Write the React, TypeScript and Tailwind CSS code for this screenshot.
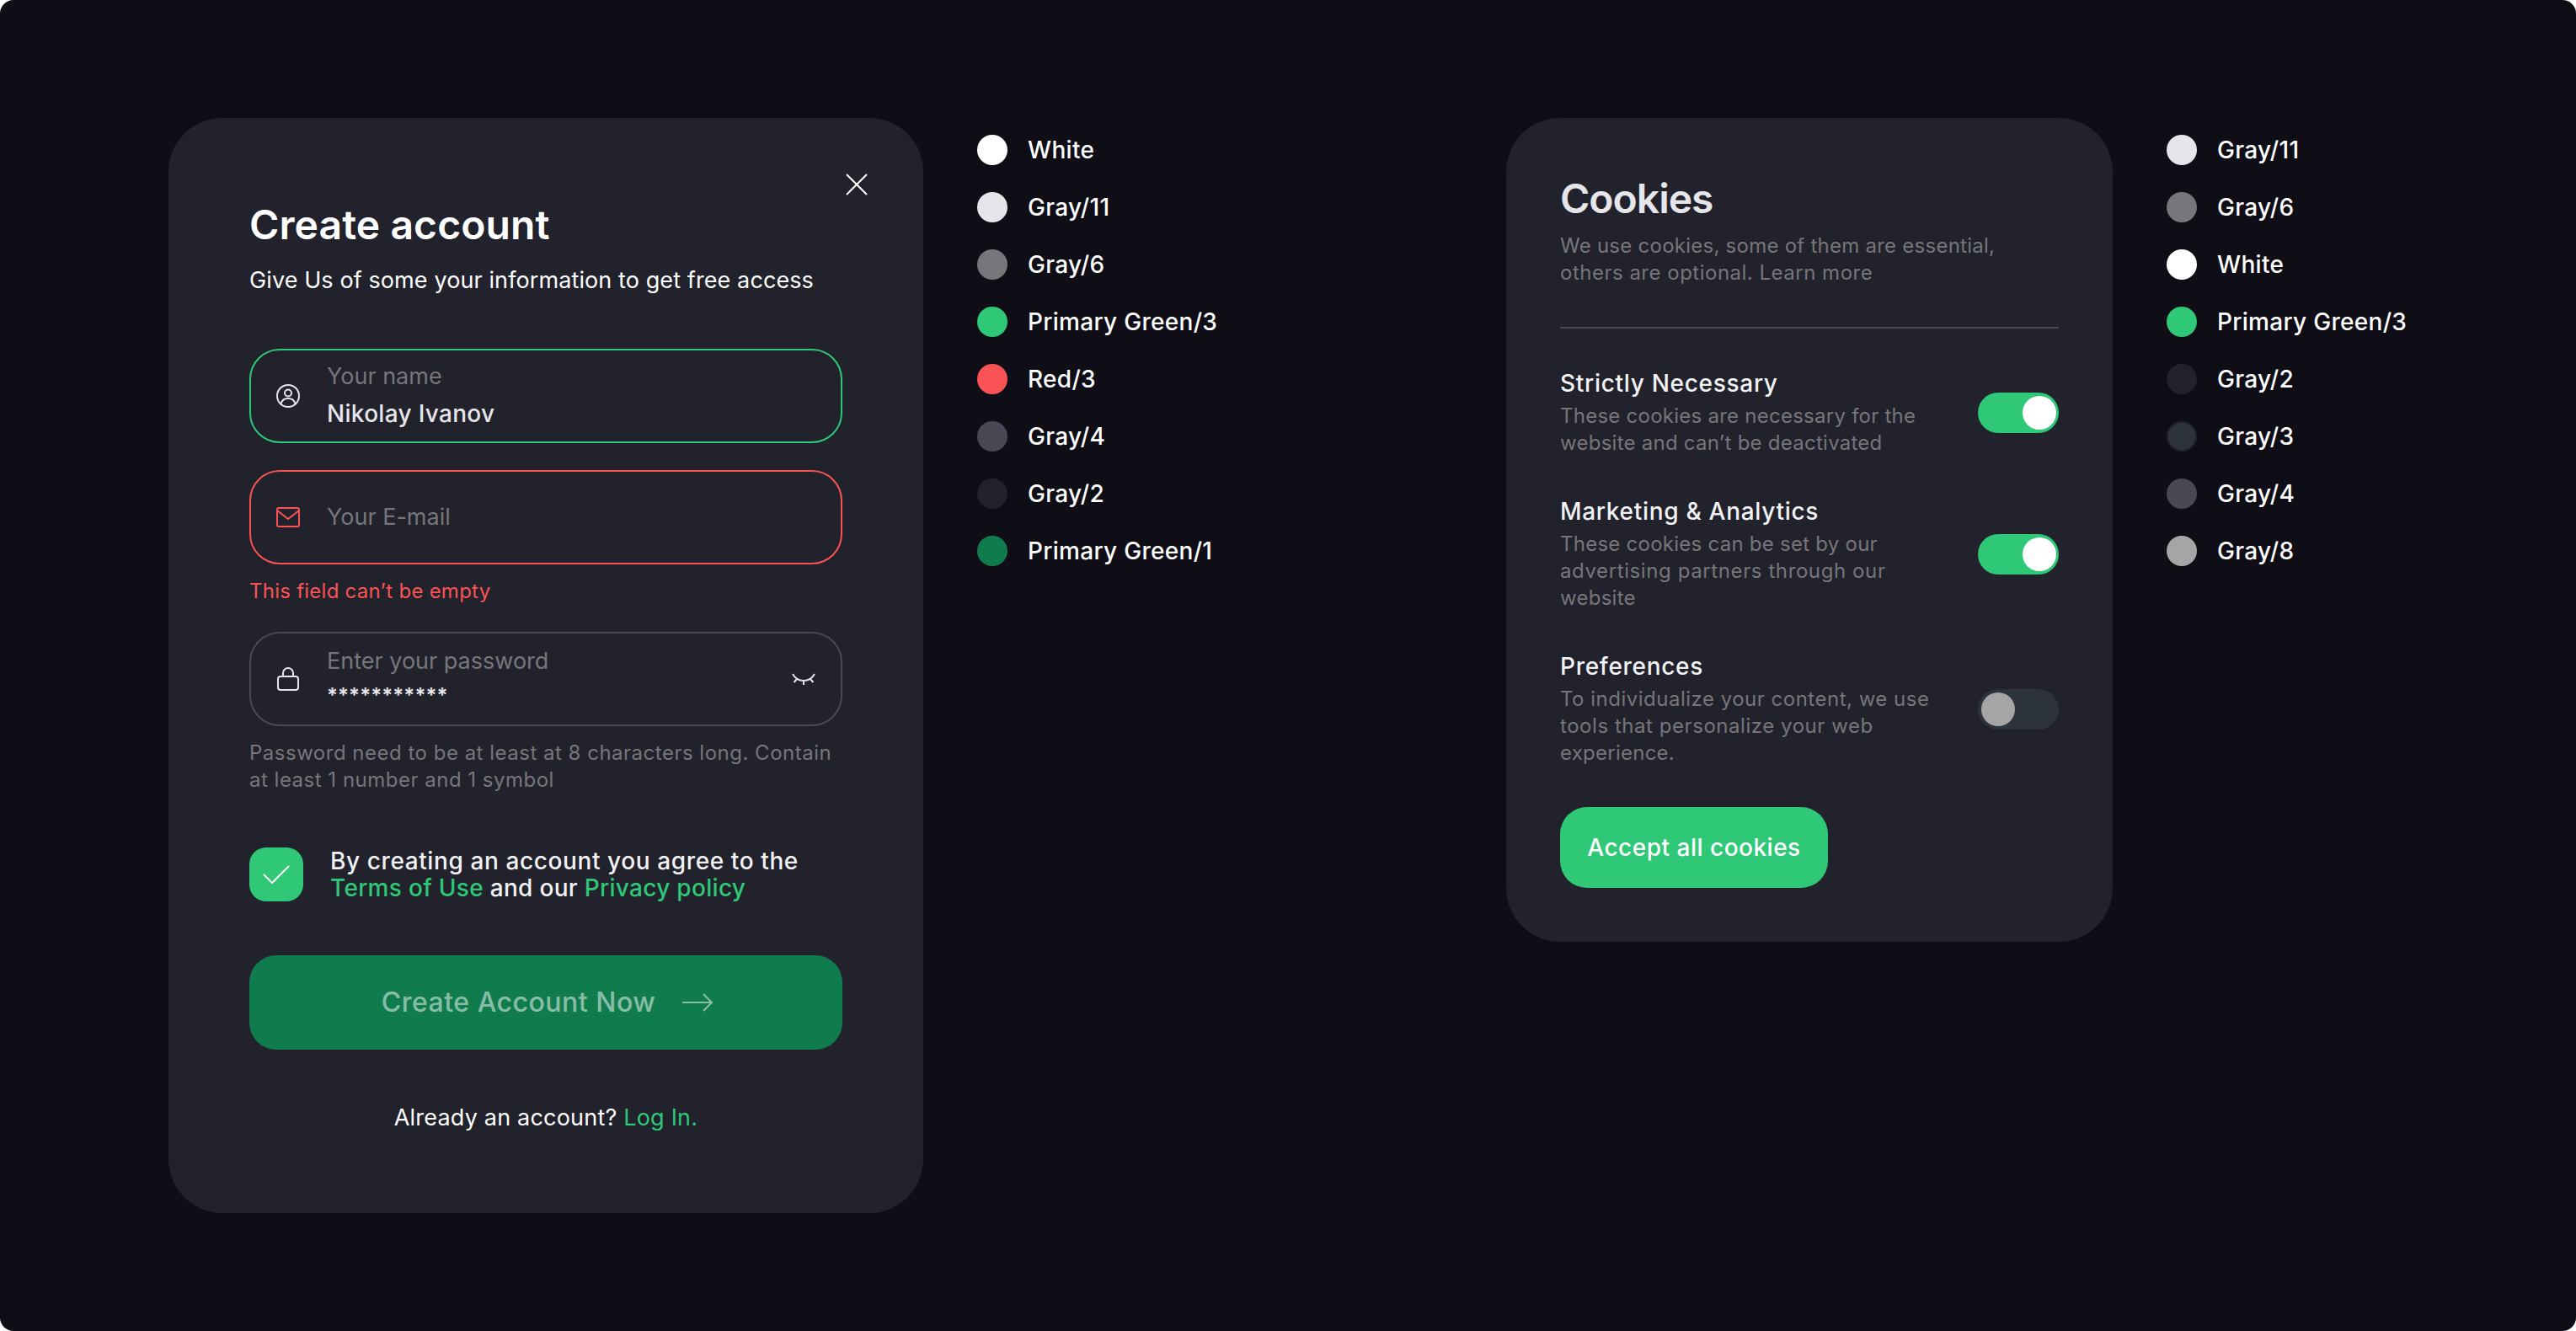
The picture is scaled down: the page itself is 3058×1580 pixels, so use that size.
import React from "react";

type Dot = { name: string; dot: string };

const legendA: Dot[] = [
  { name: "White", dot: "bg-white" },
  { name: "Gray/11", dot: "bg-[#E5E5EA]" },
  { name: "Gray/6", dot: "bg-[#76767B]" },
  { name: "Primary Green/3", dot: "bg-[#2EC877]" },
  { name: "Red/3", dot: "bg-[#F95355]" },
  { name: "Gray/4", dot: "bg-[#4A4854]" },
  { name: "Gray/2", dot: "bg-[#22222C]" },
  { name: "Primary Green/1", dot: "bg-[#107C4D]" },
];

const legendB: Dot[] = [
  { name: "Gray/11", dot: "bg-[#E5E5EA]" },
  { name: "Gray/6", dot: "bg-[#76767B]" },
  { name: "White", dot: "bg-white" },
  { name: "Primary Green/3", dot: "bg-[#2EC877]" },
  { name: "Gray/2", dot: "bg-[#22222C]" },
  { name: "Gray/3", dot: "bg-[#2C333A] border-2 border-[#22222C]" },
  { name: "Gray/4", dot: "bg-[#4A4854]" },
  { name: "Gray/8", dot: "bg-[#A5A5A8]" },
];

function Legend({ items }: { items: Dot[] }) {
  return (
    <div className="flex flex-col gap-[32px] pt-[20px]">
      {items.map((it, i) => (
        <div key={i} className="flex items-center gap-[24px] h-[36px]">
          <span className={"w-[36px] h-[36px] rounded-full shrink-0 " + it.dot} />
          <span className="text-[28px] leading-[36px] font-medium text-white tracking-[0.3px] whitespace-nowrap">{it.name}</span>
        </div>
      ))}
    </div>
  );
}

function Toggle({ on }: { on: boolean }) {
  return on ? (
    <div className="w-[96px] h-[48px] mb-[1px] rounded-full bg-[#2EC877] flex items-center justify-end pr-[3px] shrink-0">
      <span className="w-[40px] h-[40px] rounded-full bg-white" />
    </div>
  ) : (
    <div className="w-[96px] h-[48px] mb-[1px] rounded-full bg-[#2C333A] flex items-center justify-start pl-[4px] shrink-0">
      <span className="w-[40px] h-[40px] rounded-full bg-[#A5A5A8]" />
    </div>
  );
}

function CookieRow({ title, children, on, className }: { title: string; children: React.ReactNode; on: boolean; className: string }) {
  return (
    <div className={"flex items-center justify-between " + className}>
      <div>
        <div className="text-[28px] leading-[32px] font-medium text-[#F2F2F5] tracking-[0.7px]">{title}</div>
        <div className="mt-[7px] text-[24px] leading-[32px] text-[#76767B] tracking-[0.25px] whitespace-nowrap">{children}</div>
      </div>
      <Toggle on={on} />
    </div>
  );
}

export default function App() {
  return (
    <div className="w-[3058px] h-[1580px] bg-white font-['Inter',sans-serif]">
      <div className="w-full h-full rounded-[16px] bg-[#0F0E17] flex items-start pt-[140px] pl-[200px]">
        {/* Create account */}
        <div className="relative w-[896px] h-[1300px] rounded-[64px] bg-[#22222C] px-[96px] pt-[99px] shrink-0">
          <svg className="absolute left-[804px] top-[66px]" width="26" height="26" viewBox="0 0 26 26" fill="none" stroke="#fff" strokeWidth="2">
            <path d="M1 1 25 25M25 1 1 25" />
          </svg>
          <div className="text-[48px] leading-[56px] font-semibold text-white tracking-[0.1px]">Create account</div>
          <div className="mt-[18px] text-[27px] leading-[40px] text-white tracking-[0.1px] whitespace-nowrap">Give Us of some your information to get free access</div>

          <div className="mt-[61px] h-[112px] rounded-[36px] border-2 border-[#2EC877] flex items-center pl-[30px]">
            <svg className="shrink-0" width="28" height="28" viewBox="0 0 28 28" fill="none" stroke="#E5E5EA" strokeWidth="2">
              <circle cx="14" cy="14" r="13" />
              <circle cx="14" cy="10.5" r="4" />
              <path d="M5.5 23.5c1-4.500 4.500-6.500 8.500-6.500s7.500 2 8.500 6.500" />
            </svg>
            <div className="ml-[32px] pb-[3px]">
              <div className="text-[27px] leading-[36px] text-[#76767B]">Your name</div>
              <div className="mt-[8px] text-[28px] leading-[36px] font-medium text-[#E5E5EA] tracking-[0.3px]">Nikolay Ivanov</div>
            </div>
          </div>

          <div className="mt-[32px] h-[112px] rounded-[36px] border-2 border-[#F95355] flex items-center pl-[30px]">
            <svg className="shrink-0" width="28" height="24" viewBox="0 0 28 24" fill="none" stroke="#F95355" strokeWidth="2">
              <rect x="1" y="1" width="26" height="22" rx="2" />
              <path d="M1 4l13 10L27 4" />
            </svg>
            <div className="ml-[32px] text-[27px] leading-[36px] text-[#76767B]">Your E-mail</div>
          </div>
          <div className="mt-[16px] text-[24px] leading-[32px] text-[#F95355] tracking-[0.25px]">This field can’t be empty</div>

          <div className="mt-[32px] h-[112px] rounded-[36px] border-2 border-[#4A4854] flex items-center pl-[30px] pr-[30px]">
            <svg className="shrink-0" width="28" height="28" viewBox="0 0 28 28" fill="none" stroke="#E5E5EA" strokeWidth="2">
              <rect x="2" y="11" width="24" height="16" rx="3" />
              <path d="M8 11V7a6 6 0 0 1 12 0v4" />
            </svg>
            <div className="ml-[32px] pb-[5px]">
              <div className="text-[27px] leading-[36px] text-[#76767B]">Enter your password</div>
              <div className="mt-[9px] text-[24px] leading-[28px] font-semibold text-[#E5E5EA] tracking-[0.1px]">***********</div>
            </div>
            <svg className="ml-auto shrink-0" width="28" height="15" viewBox="0 0 28 15" fill="none" stroke="#E5E5EA" strokeWidth="2">
              <path d="M1 1c3 5.500 8 8 13 8s10-2.500 13-8M14 9v5M2.500 11 6.500 6.500M25.500 11 21.500 6.500" />
            </svg>
          </div>
          <div className="mt-[16px] text-[24px] leading-[32px] text-[#76767B] tracking-[0.5px] whitespace-nowrap">
            Password need to be at least at 8 characters long. Contain
            <br />
            at least 1 number and 1 symbol
          </div>

          <div className="mt-[64px] flex items-center gap-[32px]">
            <div className="w-[64px] h-[64px] rounded-[20px] bg-[#2EC877] flex items-center justify-center shrink-0">
              <svg width="32" height="22" viewBox="0 0 32 22" fill="none" stroke="#fff" strokeWidth="2">
                <path d="M1 11l10 10L31 1" />
              </svg>
            </div>
            <div className="text-[28px] leading-[32px] font-medium text-[#F2F2F5] whitespace-nowrap">
              <span className="tracking-[0.6px]">By creating an account you agree to the</span>
              <br />
              <span className="tracking-[0.3px]">
                <span className="text-[#2EC877]">Terms of Use</span> and our <span className="text-[#2EC877]">Privacy policy</span>
              </span>
            </div>
          </div>

          <div className="mt-[64px] h-[112px] rounded-[32px] bg-[#107C4D] flex items-center justify-center gap-[32px] pl-[3px]">
            <span className="text-[32px] leading-[40px] font-medium text-white/50 tracking-[0.5px]">Create Account Now</span>
            <svg className="shrink-0" width="36" height="22" viewBox="0 0 36 22" fill="none" stroke="#fff" strokeOpacity="0.5" strokeWidth="2">
              <path d="M0 11h35M25 1l10 10-10 10" />
            </svg>
          </div>

          <div className="mt-[61px] text-center text-[27px] leading-[40px] text-white tracking-[0.2px]">
            Already an account? <span className="text-[#2EC877]">Log In.</span>
          </div>
        </div>

        <div className="w-[692px] pl-[64px] shrink-0">
          <Legend items={legendA} />
        </div>

        {/* Cookies */}
        <div className="w-[720px] h-[978px] rounded-[64px] bg-[#22222C] px-[64px] pt-[68px] shrink-0">
          <div className="text-[48px] leading-[56px] font-semibold text-[#E5E5EA] tracking-[-1px]">Cookies</div>
          <div className="mt-[12px] text-[24px] leading-[32px] text-[#76767B] tracking-[0.25px] whitespace-nowrap">
            We use cookies, some of them are essential,
            <br />
            <span className="tracking-[0.5px]">others are optional. Learn more</span>
          </div>
          <div className="mt-[48px] h-[2px] bg-[#4A4854]" />
          <CookieRow title="Strictly Necessary" on className="mt-[49px]">
            These cookies are necessary for the
            <br />
            website and can’t be deactivated
          </CookieRow>
          <CookieRow title="Marketing & Analytics" on className="mt-[49px]">
            These cookies can be set by our
            <br />
            <span className="tracking-[0.6px]">advertising partners through our</span>
            <br />
            website
          </CookieRow>
          <CookieRow title="Preferences" on={false} className="mt-[49px]">
            <span className="tracking-[0.5px]">To individualize your content, we use</span>
            <br />
            <span className="tracking-[0.55px]">tools that personalize your web</span>
            <br />
            experience.
          </CookieRow>
          <div className="mt-[48px] w-[318px] h-[96px] rounded-[32px] bg-[#2EC877] flex items-center justify-center text-[28px] font-medium text-white tracking-[0.5px] whitespace-nowrap">
            Accept all cookies
          </div>
        </div>

        <div className="pl-[64px] shrink-0">
          <Legend items={legendB} />
        </div>
      </div>
    </div>
  );
}
